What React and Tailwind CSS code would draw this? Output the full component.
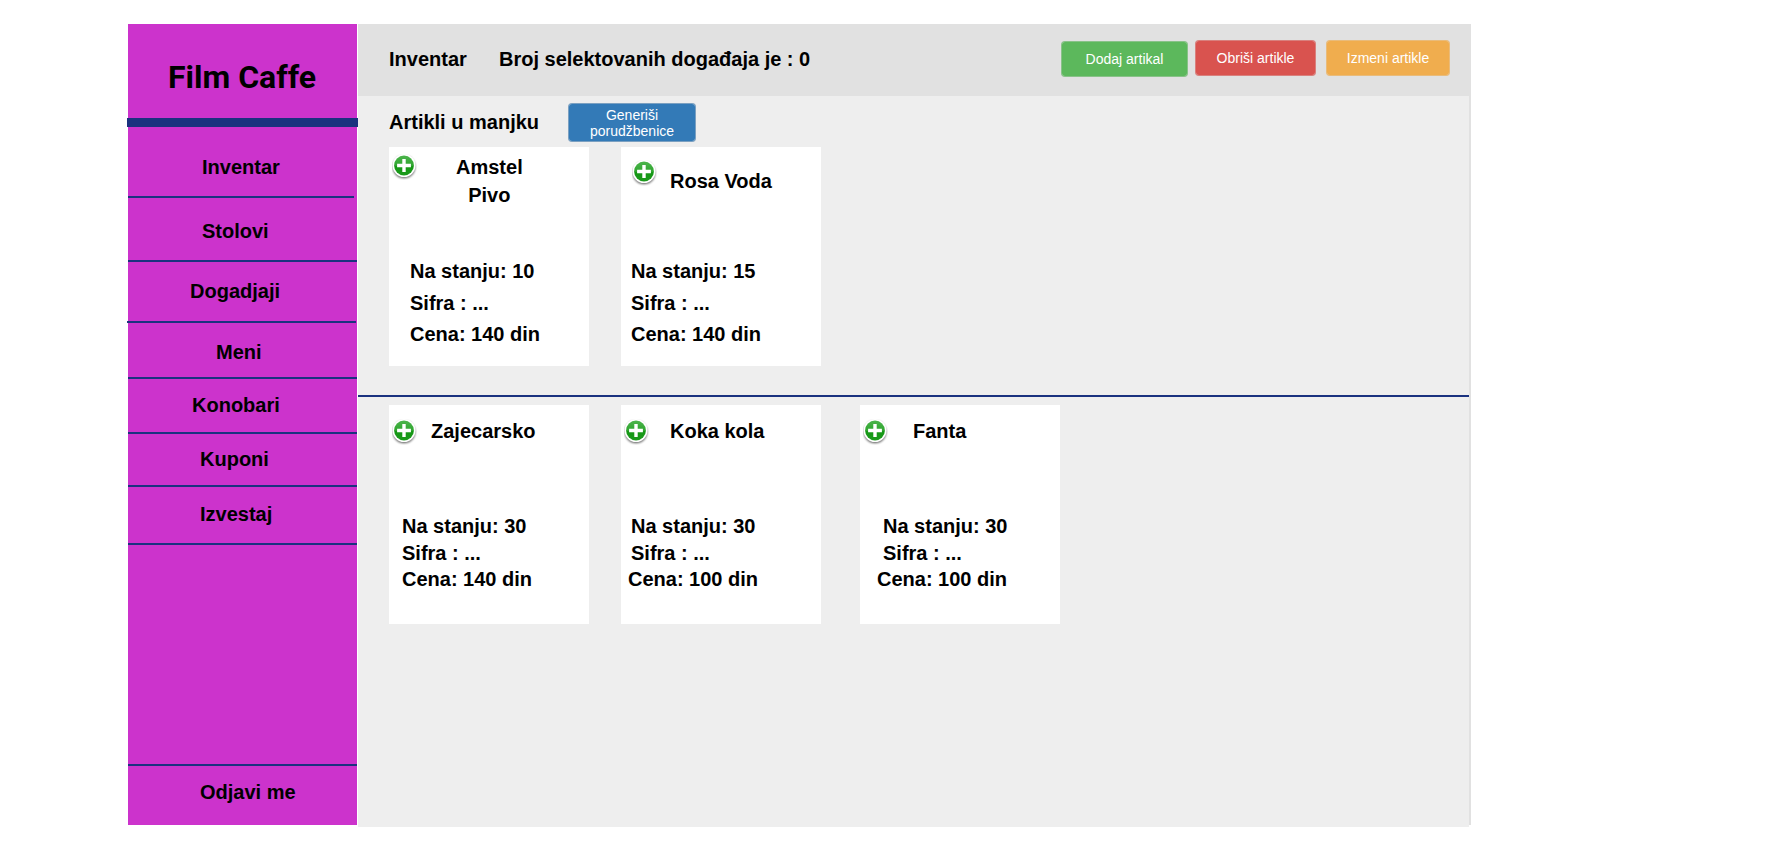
import React from "react";

const navItems = [
  { label: "Inventar", row: "h-[71px] pt-[28px] pl-[74px]", line: "w-[226px]" },
  { label: "Stolovi", row: "h-[64px] pt-[21px] pl-[74px]", line: "w-[229px]" },
  { label: "Dogadjaji", row: "h-[61px] pt-[17px] pl-[62px]", line: "w-[229px] -ml-px" },
  { label: "Meni", row: "h-[56px] pt-[17px] pl-[88px]", line: "w-[229px]" },
  { label: "Konobari", row: "h-[55px] pt-[14px] pl-[64px]", line: "w-[229px]" },
  { label: "Kuponi", row: "h-[53px] pt-[13px] pl-[72px]", line: "w-[229px]" },
  { label: "Izvestaj", row: "h-[58px] pt-[15px] pl-[72px]", line: "w-[229px]" },
];

const lowStock = [
  {
    title: ["Amstel", "Pivo"],
    icon: "mt-[7px] ml-[3px]",
    heading: "mt-[6px] ml-[39px]",
    stats: [
      { text: "Na stanju: 10", cls: "pl-[21px] h-[32px]" },
      { text: "Sifra : ...", cls: "pl-[21px] h-[31px]" },
      { text: "Cena: 140 din", cls: "pl-[21px]" },
    ],
  },
  {
    title: ["Rosa Voda"],
    icon: "mt-[13px] ml-[11px]",
    heading: "mt-[20px] ml-[13px]",
    stats: [
      { text: "Na stanju: 15", cls: "pl-[10px] h-[32px]" },
      { text: "Sifra : ...", cls: "pl-[10px] h-[31px]" },
      { text: "Cena: 140 din", cls: "pl-[10px]" },
    ],
  },
];

const inStock = [
  {
    title: ["Zajecarsko"],
    icon: "mt-[14px] ml-[3px]",
    heading: "mt-[12px] ml-[14px]",
    gap: "",
    stats: [
      { text: "Na stanju: 30", cls: "pl-[13px] h-[27px]" },
      { text: "Sifra : ...", cls: "pl-[13px] h-[26px]" },
      { text: "Cena: 140 din", cls: "pl-[13px]" },
    ],
  },
  {
    title: ["Koka kola"],
    icon: "mt-[14px] ml-[3px]",
    heading: "mt-[12px] ml-[21px]",
    gap: "ml-[32px]",
    stats: [
      { text: "Na stanju: 30", cls: "pl-[10px] h-[27px]" },
      { text: "Sifra : ...", cls: "pl-[10px] h-[26px]" },
      { text: "Cena: 100 din", cls: "pl-[7px]" },
    ],
  },
  {
    title: ["Fanta"],
    icon: "mt-[14px] ml-[3px]",
    heading: "mt-[12px] ml-[25px]",
    gap: "ml-[39px]",
    stats: [
      { text: "Na stanju: 30", cls: "pl-[23px] h-[27px]" },
      { text: "Sifra : ...", cls: "pl-[23px] h-[26px]" },
      { text: "Cena: 100 din", cls: "pl-[17px]" },
    ],
  },
];

function AddIcon({ className }) {
  return (
    <svg className={`h-[26px] w-[25px] shrink-0 ${className}`} viewBox="0 0 25 26">
      <defs>
        <linearGradient id="addFill" x1="0" y1="0" x2="0" y2="1">
          <stop offset="0" stopColor="#4cb44c" />
          <stop offset="0.5" stopColor="#2fa52f" />
          <stop offset="0.52" stopColor="#159715" />
          <stop offset="1" stopColor="#1c9a1c" />
        </linearGradient>
        <filter id="addShadow" x="-30%" y="-30%" width="160%" height="160%">
          <feGaussianBlur stdDeviation="0.9" />
        </filter>
      </defs>
      <circle cx="12" cy="12.9" r="11.3" fill="#000" opacity="0.6" filter="url(#addShadow)" />
      <circle cx="12" cy="11.5" r="11.5" fill="#fff" />
      <circle cx="12" cy="11.5" r="9.9" fill="url(#addFill)" />
      <path d="M12 4.9v13.2M5.1 11.5h13.8" stroke="#fff" strokeWidth="3.4" />
    </svg>
  );
}

function Card({ item, headClass, className }) {
  return (
    <article className={`flex h-[219px] w-[200px] shrink-0 flex-col bg-white ${className}`}>
      <div className={`flex items-start ${headClass}`}>
        <AddIcon className={item.icon} />
        <h3 className={`text-center leading-[28px] ${item.heading}`}>
          {item.title.map((part) => (
            <span key={part} className="block whitespace-nowrap">{part}</span>
          ))}
        </h3>
      </div>
      {item.stats.map((s) => (
        <p key={s.text} className={`shrink-0 whitespace-nowrap ${s.cls}`}>{s.text}</p>
      ))}
    </article>
  );
}

function Button({ children, className }) {
  return (
    <button
      className={`flex items-center justify-center rounded-[4px] border bg-clip-padding text-center text-[14px] leading-[16px] font-normal text-white ${className}`}
    >
      {children}
    </button>
  );
}

export default function App() {
  return (
    <div className="flex h-[857px] w-[1790px] items-start overflow-hidden bg-white pt-[24px] pl-[128px] font-['Liberation_Sans',Arial,sans-serif] text-[20px] leading-[24px] font-bold text-black">
      <aside className="flex h-[801px] w-[229px] shrink-0 flex-col bg-[#cc33cc]">
        <h1 className="h-[94px] shrink-0 pt-[34px] pl-[40px] font-['Roboto',sans-serif] text-[32px] leading-[38px] font-bold whitespace-nowrap">
          Film Caffe
        </h1>
        <div className="-ml-[1.5px] h-[9px] w-[231.5px] shrink-0 bg-[#1a327f]" />
        <nav className="flex flex-col">
          {navItems.map((n) => (
            <a key={n.label} className="flex flex-col">
              <span className={`-mb-[2px] block ${n.row}`}>{n.label}</span>
              <span className={`block h-[2px] bg-[#1a327f] ${n.line}`} />
            </a>
          ))}
        </nav>
        <a className="mt-auto h-[61px] border-t-2 border-[#1a327f] pt-[14px] pl-[72px]">Odjavi me</a>
      </aside>

      <main className="ml-px flex h-[803px] w-[1113px] shrink-0 flex-col">
        <header className="flex h-[72px] shrink-0 items-start bg-[#e1e1e1] pl-[31px]">
          <span className="mt-[23px] w-[110px]">Inventar</span>
          <span className="mt-[23px] whitespace-nowrap">Broj selektovanih događaja je : 0</span>
          <div className="mr-[21px] ml-auto flex items-start">
            <Button className="mt-[17px] h-[36px] w-[127px] border-[#4cae4c]/60 bg-[#5cb85c]">Dodaj artikal</Button>
            <Button className="mt-[16px] ml-[7px] h-[36px] w-[121px] border-[#d43f3a]/60 bg-[#d9534f]">Obriši artikle</Button>
            <Button className="mt-[16px] ml-[10px] h-[36px] w-[124px] border-[#eea236]/60 bg-[#f0ad4e]">Izmeni artikle</Button>
          </div>
        </header>

        <div className="flex grow">
          <div className="flex w-[1111px] flex-col bg-[#eeeeee]">
            <section className="flex h-[299px] shrink-0 flex-col">
              <div className="flex h-[51px] shrink-0 items-start pl-[31px]">
                <h2 className="mt-[14px] w-[179px]">Artikli u manjku</h2>
                <Button className="mt-[7px] h-[39px] w-[128px] border-[#2e6da4]/60 bg-[#337ab7] px-[18px]">
                  Generiši porudžbenice
                </Button>
              </div>
              <div className="flex gap-[32px] pl-[31px]">
                {lowStock.map((item) => (
                  <Card key={item.title[0]} item={item} headClass="h-[112px] shrink-0" className="" />
                ))}
              </div>
            </section>
            <div className="h-[2px] shrink-0 bg-[#1a327f]" />
            <section className="mt-[8px] flex pl-[31px]">
              {inStock.map((item) => (
                <Card key={item.title[0]} item={item} headClass="h-[109px] shrink-0" className={item.gap} />
              ))}
            </section>
          </div>
          <div className="mb-[2px] w-[2px] bg-[#e1e1e1]" />
        </div>
      </main>
    </div>
  );
}
